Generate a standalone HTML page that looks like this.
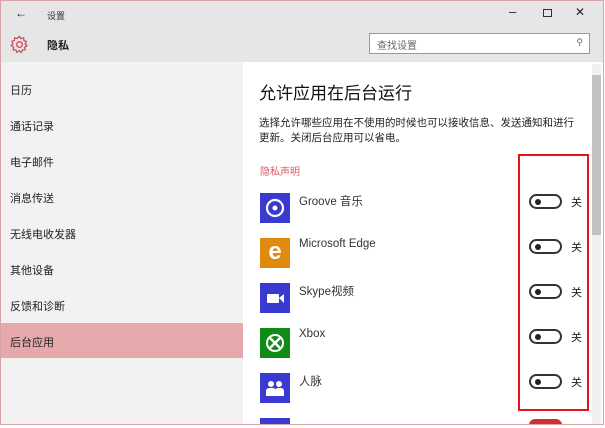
<!DOCTYPE html><html><head><meta charset="utf-8"><style>
*{margin:0;padding:0;box-sizing:border-box}
body{width:605px;height:428px;overflow:hidden;background:#fff;font-family:"Liberation Sans","Noto Sans CJK SC",sans-serif;color:#222;position:relative}
.wrap{position:absolute;left:0;top:0;width:605px;height:424px;overflow:hidden}
.a{position:absolute}
.frame{left:0;top:0;width:604px;height:425px;border:1px solid #d9a3a8}
.hdr{left:1px;top:1px;width:602px;height:61px;background:#e6e6e6}
.side{left:1px;top:62px;width:242px;height:362px;background:#f2f2f2}
.it{left:10px;font-size:11px;color:#222}
.sel{left:1px;top:323px;width:242px;height:35px;background:#e5a9ab}
.ic{left:260px;width:30px;height:30px}
.nm{left:299px;font-size:11.5px;color:#333}
.tg{left:529px;width:33px;height:15px;border:2px solid #333;border-radius:8px}
.tg:after{content:"";position:absolute;left:4px;top:2.5px;width:6px;height:6px;border-radius:50%;background:#222}
.off{left:571px;font-size:11px}
</style></head><body><div class="wrap">
<div class="a hdr"></div>
<div class="a side"></div>
<div class="a sel"></div>
<div class="a" style="left:15px;top:6px;font-size:12px">←</div>
<div class="a" style="left:47px;top:9px;font-size:9px;color:#333">设置</div>
<svg class="a" style="left:10px;top:35px" width="19" height="19" viewBox="0 0 20 20"><path d="M10 1.5l1.6 2.3 2.7-.8.3 2.8 2.6 1-1.2 2.5 1.9 2-2.4 1.5.3 2.8-2.8.1-1.1 2.6-2.3-1.6-2.3 1.6-1.1-2.6-2.8-.1.3-2.8L1.3 11.2l1.9-2L2 6.7l2.6-1 .3-2.8 2.7.8z" fill="none" stroke="#d0505e" stroke-width="1.4"/><circle cx="10" cy="10" r="3" fill="none" stroke="#d0505e" stroke-width="1.4"/></svg>
<div class="a" style="left:47px;top:37px;font-size:11px;font-weight:bold">隐私</div>
<div class="a" style="left:509px;top:4px;font-size:13px">–</div>
<div class="a" style="left:543px;top:9px;width:9px;height:8px;border:1.5px solid #333"></div>
<div class="a" style="left:575px;top:5px;font-size:12px">✕</div>
<div class="a" style="left:369px;top:33px;width:221px;height:21px;border:1.5px solid #999;background:#fff;font-size:10px;color:#666;padding:3px 7px">查找设置<span style="position:absolute;right:6px;top:3px;font-size:9px">⚲</span></div>
<div class="a it" style="top:82px">日历</div>
<div class="a it" style="top:118px">通话记录</div>
<div class="a it" style="top:154px">电子邮件</div>
<div class="a it" style="top:190px">消息传送</div>
<div class="a it" style="top:226px">无线电收发器</div>
<div class="a it" style="top:262px">其他设备</div>
<div class="a it" style="top:298px">反馈和诊断</div>
<div class="a it" style="top:334px">后台应用</div>
<div class="a" style="left:259px;top:79px;font-size:17px;color:#111">允许应用在后台运行</div>
<div class="a" style="left:259px;top:116px;width:325px;font-size:10.5px;line-height:15px;color:#222">选择允许哪些应用在不使用的时候也可以接收信息、发送通知和进行更新。关闭后台应用可以省电。</div>
<div class="a" style="left:260px;top:163px;font-size:10px;color:#e05a66">隐私声明</div>
<div class="a ic" style="top:193px;background:#3a3ad0"><svg width="30" height="30"><circle cx="15" cy="15" r="8" fill="none" stroke="#fff" stroke-width="2.2"/><circle cx="15" cy="15" r="2.5" fill="#fff"/></svg></div>
<div class="a nm" style="top:193px">Groove 音乐</div>
<div class="a ic" style="top:238px;background:#e08a10;color:#fff;font-size:24px;font-weight:bold;text-align:center;line-height:28px">e</div>
<div class="a nm" style="top:238px">Microsoft Edge</div>
<div class="a ic" style="top:283px;background:#3a3ad0"><svg width="30" height="30"><rect x="7" y="11" width="12" height="9" rx="1" fill="#fff"/><path d="M19 15l5-4v9z" fill="#fff"/></svg></div>
<div class="a nm" style="top:283px">Skype视频</div>
<div class="a ic" style="top:328px;background:#128a18"><svg width="30" height="30"><circle cx="15" cy="15" r="8" fill="none" stroke="#fff" stroke-width="2"/><path d="M10 10l10 10M20 10l-10 10" stroke="#fff" stroke-width="2.5"/></svg></div>
<div class="a nm" style="top:328px">Xbox</div>
<div class="a ic" style="top:373px;background:#3a3ad0"><svg width="30" height="30"><circle cx="11" cy="11" r="3" fill="#fff"/><circle cx="19" cy="11" r="3" fill="#fff"/><path d="M6 23v-5a3 3 0 013-3h4a3 3 0 013 3v5zM15 23v-5a3 3 0 013-3h3a3 3 0 013 3v5z" fill="#fff"/></svg></div>
<div class="a nm" style="top:373px">人脉</div>
<div class="a ic" style="top:418px;background:#3a3ad0"></div>
<div class="a tg" style="top:194px"></div><div class="a off" style="top:194px">关</div>
<div class="a tg" style="top:239px"></div><div class="a off" style="top:239px">关</div>
<div class="a tg" style="top:284px"></div><div class="a off" style="top:284px">关</div>
<div class="a tg" style="top:329px"></div><div class="a off" style="top:329px">关</div>
<div class="a tg" style="top:374px"></div><div class="a off" style="top:374px">关</div>
<div class="a" style="left:529px;top:419px;width:33px;height:8px;background:#d03030;border-radius:6px 6px 0 0"></div>
<div class="a" style="left:518px;top:154px;width:71px;height:257px;border:2px solid #e8141c"></div>
<div class="a" style="left:592px;top:64px;width:9px;height:360px;background:#f0f0f0"></div>
<div class="a" style="left:592px;top:75px;width:9px;height:160px;background:#c2c2c2"></div>
</div>
<div class="a frame"></div>
</body></html>
